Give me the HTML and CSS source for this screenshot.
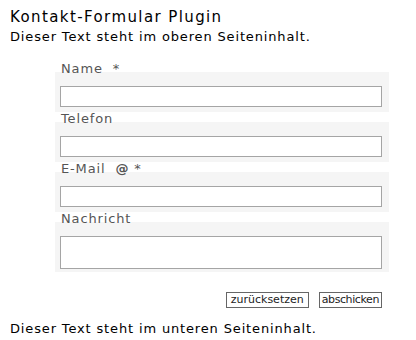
FILE: index.html
```html
<!doctype html>
<html>
  <head>
    <title>Kontakt-Formular Plugin</title>
    <meta http-equiv="Content-Type" content="text/html; charset=utf-8" />
    <link rel="stylesheet" href="styles.css">
  </head>
  <body>
    <h1>Kontakt-Formular Plugin</h1>
    <p class="text">Dieser Text steht im oberen Seiteninhalt.</p>
    <form class="contact" action="#">
      <div class="field">
        <label for="name">Name <span class="mark">*</span></label>
        <input type="text" id="name" name="name" />
      </div>
      <div class="field">
        <label for="phone">Telefon</label>
        <input type="text" id="phone" name="phone" />
      </div>
      <div class="field">
        <label for="mail">E-Mail <span class="mark"><b>@</b> *</span></label>
        <input type="text" id="mail" name="mail" />
      </div>
      <div class="field area">
        <label for="msg">Nachricht</label>
        <textarea id="msg" name="msg"></textarea>
      </div>
      <div class="buttons">
        <button type="reset" class="reset">zurücksetzen</button>
        <button type="submit" class="send">abschicken</button>
      </div>
    </form>
    <p class="text bottom">Dieser Text steht im unteren Seiteninhalt.</p>
  </body>
</html>
```

FILE: styles.css
```css
* {
  margin: 0px;
  padding: 0px;
}
body {
  background-color: #ffffff;
  padding: 7px 10px;
  font-family: "DejaVu Sans", Verdana, sans-serif;
  font-size: 13px;
  letter-spacing: 0.85px;
  color: #000;
}
h1 {
  font-size: 15px;
  font-weight: normal;
  letter-spacing: 1.4px;
  line-height: 20px;
  margin-bottom: 1px;
}
.text {
  line-height: 18px;
}
.contact {
  display: flex;
  flex-direction: column;
  gap: 10px;
  width: 334px;
  margin: 26px 0 0 45px;
}
.field {
  display: flow-root;
  background-color: #f5f5f5;
  padding: 0 7px 5px 5px;
}
.field label {
  display: block;
  margin: -11px 0 10px 1px;
  line-height: 15px;
  color: #555;
}
.mark {
  margin-left: 5px;
}
.field input,
.field textarea {
  display: block;
  box-sizing: border-box;
  width: 100%;
  height: 21px;
  border: 1px solid #a5a5a5;
  background: #fff;
  font: inherit;
  resize: none;
}
.area {
  padding-bottom: 3px;
}
.field textarea {
  height: 33px;
}
.buttons {
  display: flex;
  justify-content: flex-end;
  gap: 10px;
  margin-top: 10px;
  padding-right: 7px;
}
.buttons button {
  height: 16px;
  padding: 0 2px;
  border: 1px solid #666;
  border-radius: 0;
  background: #fff;
  color: #222;
  font-family: "DejaVu Sans", Verdana, sans-serif;
  font-size: 11px;
  letter-spacing: 0;
  line-height: 14px;
}
.buttons .reset {
  padding: 0 4px;
}
.buttons .send {
  padding: 0 2px;
  letter-spacing: -0.4px;
}
.bottom {
  margin-top: 12px;
}
```
